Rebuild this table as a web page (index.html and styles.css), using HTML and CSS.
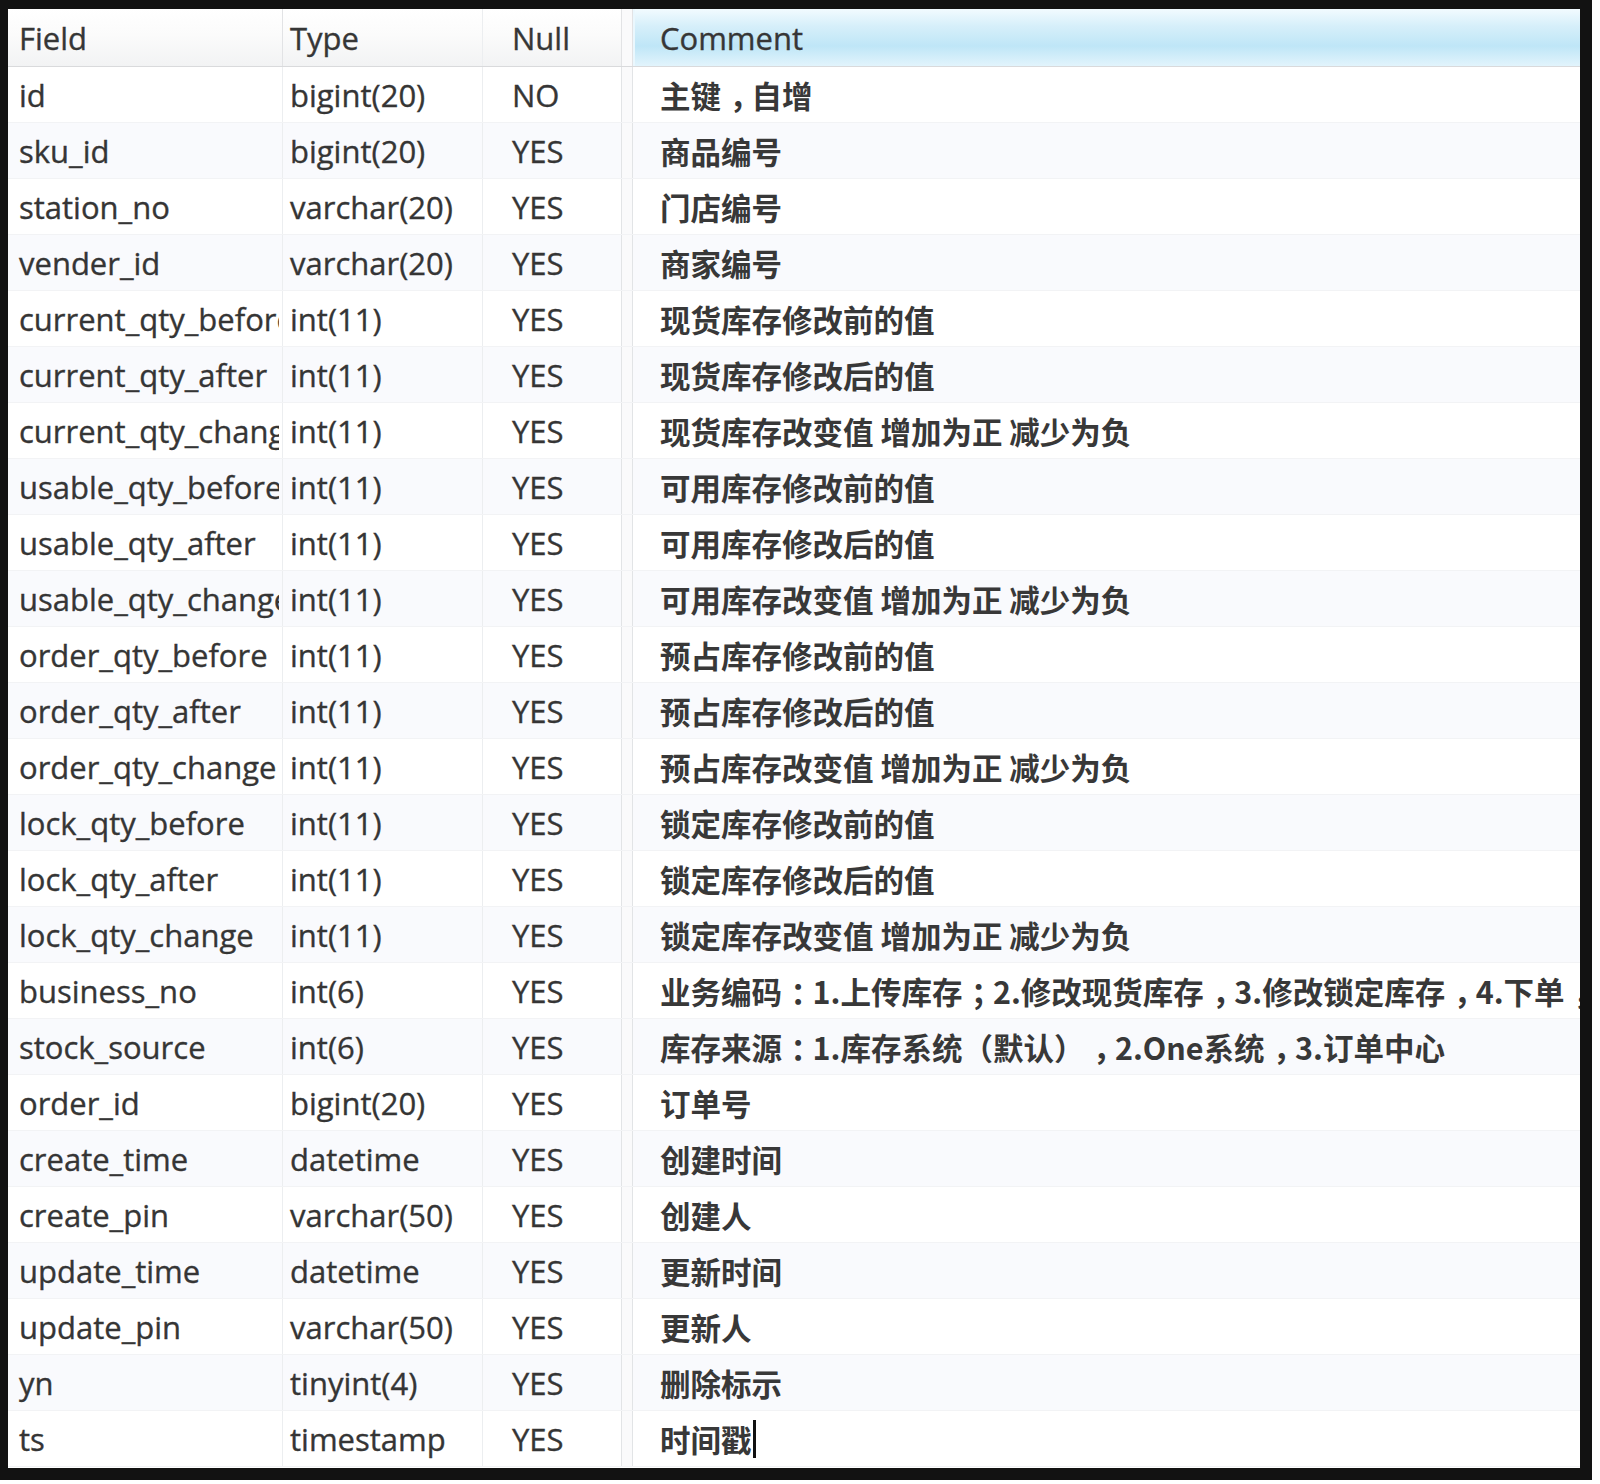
FILE: index.html
```html
<!DOCTYPE html>
<html lang="zh-CN">
<head>
<meta charset="utf-8">
<title>Table structure</title>
<link rel="stylesheet" href="styles.css">
</head>
<body>
<div class="frame">
  <div class="grid">
    <div class="row head">
      <div class="cell c-field">Field</div>
      <div class="cell c-type">Type</div>
      <div class="cell c-null">Null</div>
      <div class="cell c-split"></div>
      <div class="cell c-comment sorted">Comment</div>
    </div>
    <div class="row"><div class="cell c-field">id</div><div class="cell c-type">bigint(20)</div><div class="cell c-null">NO</div><div class="cell c-split"></div><div class="cell c-comment">主键<span class="pc">，</span>自增</div></div>
    <div class="row alt"><div class="cell c-field">sku_id</div><div class="cell c-type">bigint(20)</div><div class="cell c-null">YES</div><div class="cell c-split"></div><div class="cell c-comment">商品编号</div></div>
    <div class="row"><div class="cell c-field">station_no</div><div class="cell c-type">varchar(20)</div><div class="cell c-null">YES</div><div class="cell c-split"></div><div class="cell c-comment">门店编号</div></div>
    <div class="row alt"><div class="cell c-field">vender_id</div><div class="cell c-type">varchar(20)</div><div class="cell c-null">YES</div><div class="cell c-split"></div><div class="cell c-comment">商家编号</div></div>
    <div class="row"><div class="cell c-field">current_qty_before</div><div class="cell c-type">int(11)</div><div class="cell c-null">YES</div><div class="cell c-split"></div><div class="cell c-comment">现货库存修改前的值</div></div>
    <div class="row alt"><div class="cell c-field">current_qty_after</div><div class="cell c-type">int(11)</div><div class="cell c-null">YES</div><div class="cell c-split"></div><div class="cell c-comment">现货库存修改后的值</div></div>
    <div class="row"><div class="cell c-field">current_qty_change</div><div class="cell c-type">int(11)</div><div class="cell c-null">YES</div><div class="cell c-split"></div><div class="cell c-comment">现货库存改变值 增加为正 减少为负</div></div>
    <div class="row alt"><div class="cell c-field">usable_qty_before</div><div class="cell c-type">int(11)</div><div class="cell c-null">YES</div><div class="cell c-split"></div><div class="cell c-comment">可用库存修改前的值</div></div>
    <div class="row"><div class="cell c-field">usable_qty_after</div><div class="cell c-type">int(11)</div><div class="cell c-null">YES</div><div class="cell c-split"></div><div class="cell c-comment">可用库存修改后的值</div></div>
    <div class="row alt"><div class="cell c-field">usable_qty_change</div><div class="cell c-type">int(11)</div><div class="cell c-null">YES</div><div class="cell c-split"></div><div class="cell c-comment">可用库存改变值 增加为正 减少为负</div></div>
    <div class="row"><div class="cell c-field">order_qty_before</div><div class="cell c-type">int(11)</div><div class="cell c-null">YES</div><div class="cell c-split"></div><div class="cell c-comment">预占库存修改前的值</div></div>
    <div class="row alt"><div class="cell c-field">order_qty_after</div><div class="cell c-type">int(11)</div><div class="cell c-null">YES</div><div class="cell c-split"></div><div class="cell c-comment">预占库存修改后的值</div></div>
    <div class="row"><div class="cell c-field">order_qty_change</div><div class="cell c-type">int(11)</div><div class="cell c-null">YES</div><div class="cell c-split"></div><div class="cell c-comment">预占库存改变值 增加为正 减少为负</div></div>
    <div class="row alt"><div class="cell c-field">lock_qty_before</div><div class="cell c-type">int(11)</div><div class="cell c-null">YES</div><div class="cell c-split"></div><div class="cell c-comment">锁定库存修改前的值</div></div>
    <div class="row"><div class="cell c-field">lock_qty_after</div><div class="cell c-type">int(11)</div><div class="cell c-null">YES</div><div class="cell c-split"></div><div class="cell c-comment">锁定库存修改后的值</div></div>
    <div class="row alt"><div class="cell c-field">lock_qty_change</div><div class="cell c-type">int(11)</div><div class="cell c-null">YES</div><div class="cell c-split"></div><div class="cell c-comment">锁定库存改变值 增加为正 减少为负</div></div>
    <div class="row"><div class="cell c-field">business_no</div><div class="cell c-type">int(6)</div><div class="cell c-null">YES</div><div class="cell c-split"></div><div class="cell c-comment">业务编码<span class="pc">：</span>1.上传库存<span class="pc">；</span>2.修改现货库存<span class="pc">，</span>3.修改锁定库存<span class="pc">，</span>4.下单<span class="pc">，</span></div></div>
    <div class="row alt"><div class="cell c-field">stock_source</div><div class="cell c-type">int(6)</div><div class="cell c-null">YES</div><div class="cell c-split"></div><div class="cell c-comment">库存来源<span class="pc">：</span>1.库存系统（默认）<span class="pc">，</span>2.One系统<span class="pc">，</span>3.订单中心</div></div>
    <div class="row"><div class="cell c-field">order_id</div><div class="cell c-type">bigint(20)</div><div class="cell c-null">YES</div><div class="cell c-split"></div><div class="cell c-comment">订单号</div></div>
    <div class="row alt"><div class="cell c-field">create_time</div><div class="cell c-type">datetime</div><div class="cell c-null">YES</div><div class="cell c-split"></div><div class="cell c-comment">创建时间</div></div>
    <div class="row"><div class="cell c-field">create_pin</div><div class="cell c-type">varchar(50)</div><div class="cell c-null">YES</div><div class="cell c-split"></div><div class="cell c-comment">创建人</div></div>
    <div class="row alt"><div class="cell c-field">update_time</div><div class="cell c-type">datetime</div><div class="cell c-null">YES</div><div class="cell c-split"></div><div class="cell c-comment">更新时间</div></div>
    <div class="row"><div class="cell c-field">update_pin</div><div class="cell c-type">varchar(50)</div><div class="cell c-null">YES</div><div class="cell c-split"></div><div class="cell c-comment">更新人</div></div>
    <div class="row alt"><div class="cell c-field">yn</div><div class="cell c-type">tinyint(4)</div><div class="cell c-null">YES</div><div class="cell c-split"></div><div class="cell c-comment">删除标示</div></div>
    <div class="row"><div class="cell c-field">ts</div><div class="cell c-type">timestamp</div><div class="cell c-null">YES</div><div class="cell c-split"></div><div class="cell c-comment">时间戳<span class="caret"></span></div></div>
  </div>
</div>
</body>
</html>
```
FILE: styles.css
```css
html, body {
  margin: 0;
  padding: 0;
  background: #ffffff;
}

.frame {
  width: 1572px;
  height: 1459px;
  border-style: solid;
  border-color: #121212;
  border-width: 9px 12px 12px 8px;
  background: #ffffff;
  overflow: hidden;
}

.grid {
  display: flex;
  flex-direction: column;
}

.row {
  display: grid;
  grid-template-columns: 274px 201px 139px 11px 947px;
  height: 56px;
  background: #ffffff;
  border-bottom: 1px solid #f2f3f5;
  box-sizing: border-box;
}

.row.alt {
  background: #f9fafd;
}

.row.head {
  height: 58px;
  background: linear-gradient(to bottom, #ffffff 0%, #fbfbfb 45%, #f2f3f4 100%);
  border-bottom: 1px solid #d9dadc;
}

.cell {
  display: flex;
  align-items: center;
  overflow: hidden;
  white-space: nowrap;
  font-family: "Open Sans", "Noto Sans CJK SC", sans-serif;
  font-weight: 400;
  font-size: 31px;
  letter-spacing: 0;
  color: #353535;
  -webkit-text-stroke: 0.35px #353535;
  box-sizing: border-box;
  border-right: 1px solid #eceef0;
}

.c-field {
  padding-left: 11px;
  border-right: none;
  clip-path: inset(0 3px 0 0);
}
.c-type {
  padding-left: 7px;
  border-left: 1px solid #eceef0;
}
.c-null { padding-left: 29px; border-right-color: #e2e4e6; }
.c-split { background: #fafafb; border-right-color: #e2e4e6; }
.c-comment {
  padding-left: 27px;
  border-right: none;
  font-family: "Noto Sans CJK SC", "Open Sans", sans-serif;
  font-weight: 700;
  font-size: 30.5px;
  letter-spacing: 0;
  color: #383838;
  -webkit-text-stroke: 0;
}

.pc {
  font-feature-settings: "halt" 1;
  padding: 0 0.22em 0 0.28em;
}

.head .cell {
  font-family: "Open Sans", sans-serif;
  font-weight: 400;
  font-size: 31px;
  color: #363636;
  -webkit-text-stroke: 0.35px #363636;
}
.head .c-type { border-left-color: #e2e3e5; }
.head .c-null, .head .c-split { border-right-color: #e2e3e5; }

.head .sorted {
  background: linear-gradient(to bottom, #f2fbff 0%, #d6effa 30%, #bfe6f7 65%, #e2f4fc 100%);
  box-shadow: inset 2px 0 0 #eaf7fd;
}

.caret {
  display: inline-block;
  width: 3px;
  height: 38px;
  background: #111111;
  margin-left: 1px;
}
```
